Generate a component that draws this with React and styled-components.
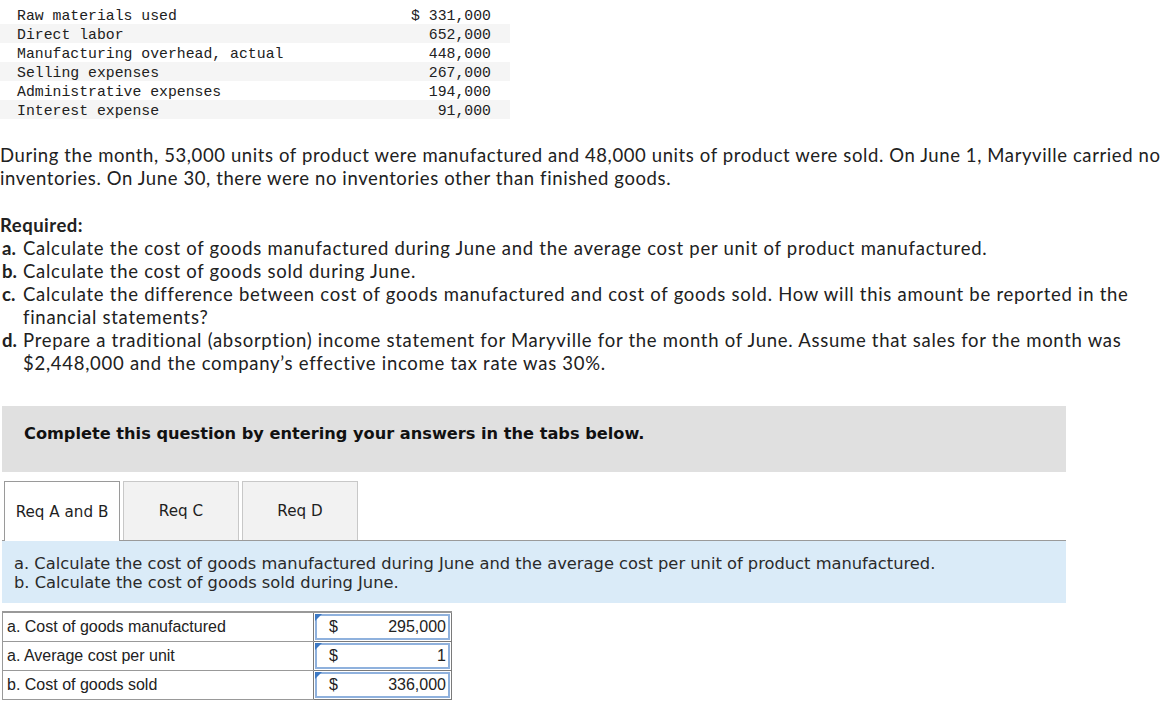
import React from "react";
import styled, { createGlobalStyle } from "styled-components";

const GlobalStyle = createGlobalStyle`
  body {
    margin: 0;
    background: #fff;
    color: #212121;
  }
`;

const Page = styled.div`
  width: 1163px;
  overflow: hidden;
`;

const CostTable = styled.div`
  width: 510px;
  margin-top: 5px;
  font-family: "Liberation Mono", monospace;
  font-size: 14.8px;
  color: #212121;
`;

const CostRow = styled.div`
  display: flex;
  justify-content: space-between;
  height: 19px;
  box-sizing: border-box;
  padding: 3px 19px 0 17px;
  line-height: 16px;
  background: ${(p) => (p.$striped ? "#f5f5f5" : "#fff")};
  white-space: pre;
`;

const Paragraph = styled.p`
  font-family: "Lato", sans-serif;
  font-size: 18.5px;
  letter-spacing: 0.6px;
  line-height: 23px;
  margin: 25px 0 0 0;
  color: #212121;
`;

const Heading = styled.div`
  font-family: "Lato", sans-serif;
  font-size: 18.5px;
  letter-spacing: 0.5px;
  font-weight: bold;
  line-height: 23px;
  margin-top: 24px;
`;

const ReqList = styled.div`
  font-family: "Lato", sans-serif;
  font-size: 18.5px;
  letter-spacing: 0.72px;
  line-height: 23px;
`;

const ReqItem = styled.div`
  display: flex;
  padding-left: 2px;
`;

const ReqLabel = styled.b`
  width: 21px;
  flex: none;
  letter-spacing: 0;
`;

const Banner = styled.div`
  margin: 31px 0 0 2px;
  width: 1064px;
  height: 66px;
  box-sizing: border-box;
  padding: 18px 22px 0;
  background: #e0e0e0;
  font-family: "DejaVu Sans", Verdana, sans-serif;
  font-size: 16.2px;
  font-weight: bold;
  line-height: 20px;
  color: #111;
`;

const TabBar = styled.div`
  display: flex;
  gap: 3px;
  margin: 9px 0 0 2px;
  width: 1064px;
  box-sizing: border-box;
  padding-left: 2px;
  border-bottom: 1px solid #9a9a9a;
`;

const Tab = styled.div`
  width: 116px;
  box-sizing: border-box;
  display: flex;
  align-items: center;
  justify-content: center;
  font-family: "DejaVu Sans", Verdana, sans-serif;
  font-size: 15.2px;
  color: #1f1f1f;
  background: ${(p) => (p.$active ? "#fff" : "#f2f2f2")};
  border: 1px solid ${(p) => (p.$active ? "#9a9a9a" : "#c8c8c8")};
  border-bottom: none;
  margin-bottom: ${(p) => (p.$active ? "-1px" : "0")};
  height: ${(p) => (p.$active ? "60px" : "59px")};
`;

const Prompt = styled.div`
  margin-left: 2px;
  width: 1064px;
  height: 62px;
  box-sizing: border-box;
  padding: 13px 12px 0;
  background: #daebf8;
  font-family: "DejaVu Sans", Verdana, sans-serif;
  font-size: 16.3px;
  line-height: 19px;
  color: #2a2a2a;
`;

const AnswerTable = styled.table`
  margin: 8px 0 0 2px;
  width: 450px;
  border-collapse: collapse;
  border-top: 2px solid #999;
  font-family: "Liberation Sans", Arial, sans-serif;
  font-size: 16px;
  color: #222;
`;

const LabelCell = styled.td`
  height: 28px;
  padding: 0 0 0 4px;
  border: 1px solid #999;
  border-right: none;
`;

const InputCell = styled.td`
  width: 135px;
  padding: 1px;
  border: 1px solid #7a7a7a;
`;

const InputBox = styled.div`
  position: relative;
  display: flex;
  justify-content: space-between;
  align-items: center;
  height: 26px;
  box-sizing: border-box;
  padding: 0 2px 0 12px;
  border: 2px solid #8fb1dd;
  background: #fff;

  &::before {
    content: "";
    position: absolute;
    left: -2px;
    top: -2px;
    border-top: 7px solid #3c78c3;
    border-right: 7px solid transparent;
    width: 0;
    height: 0;
  }
`;

const costs = [
  ["Raw materials used", "$ 331,000"],
  ["Direct labor", "652,000"],
  ["Manufacturing overhead, actual", "448,000"],
  ["Selling expenses", "267,000"],
  ["Administrative expenses", "194,000"],
  ["Interest expense", "91,000"],
];

const reqs = [
  ["a.", "Calculate the cost of goods manufactured during June and the average cost per unit of product manufactured."],
  ["b.", "Calculate the cost of goods sold during June."],
  ["c.", "Calculate the difference between cost of goods manufactured and cost of goods sold. How will this amount be reported in the financial statements?"],
  ["d.", "Prepare a traditional (absorption) income statement for Maryville for the month of June. Assume that sales for the month was $2,448,000 and the company’s effective income tax rate was 30%."],
];

const answers = [
  ["a. Cost of goods manufactured", "295,000"],
  ["a. Average cost per unit", "1"],
  ["b. Cost of goods sold", "336,000"],
];

export default function App() {
  return (
    <Page>
      <GlobalStyle />
      <CostTable>
        {costs.map(([label, value], i) => (
          <CostRow key={label} $striped={i % 2 === 1}>
            <span>{label}</span>
            <span>{value}</span>
          </CostRow>
        ))}
      </CostTable>

      <Paragraph>
        During the month, 53,000 units of product were manufactured and 48,000 units of product were sold. On June 1, Maryville carried no inventories. On June 30, there were no inventories other than finished goods.
      </Paragraph>

      <Heading>Required:</Heading>
      <ReqList>
        {reqs.map(([label, text]) => (
          <ReqItem key={label}>
            <ReqLabel>{label}</ReqLabel>
            <span>{text}</span>
          </ReqItem>
        ))}
      </ReqList>

      <Banner>Complete this question by entering your answers in the tabs below.</Banner>

      <TabBar>
        <Tab $active>Req A and B</Tab>
        <Tab>Req C</Tab>
        <Tab>Req D</Tab>
      </TabBar>

      <Prompt>
        a. Calculate the cost of goods manufactured during June and the average cost per unit of product manufactured.
        <br />
        b. Calculate the cost of goods sold during June.
      </Prompt>

      <AnswerTable>
        <tbody>
          {answers.map(([label, value]) => (
            <tr key={label}>
              <LabelCell>{label}</LabelCell>
              <InputCell>
                <InputBox>
                  <span>$</span>
                  <span>{value}</span>
                </InputBox>
              </InputCell>
            </tr>
          ))}
        </tbody>
      </AnswerTable>
    </Page>
  );
}
